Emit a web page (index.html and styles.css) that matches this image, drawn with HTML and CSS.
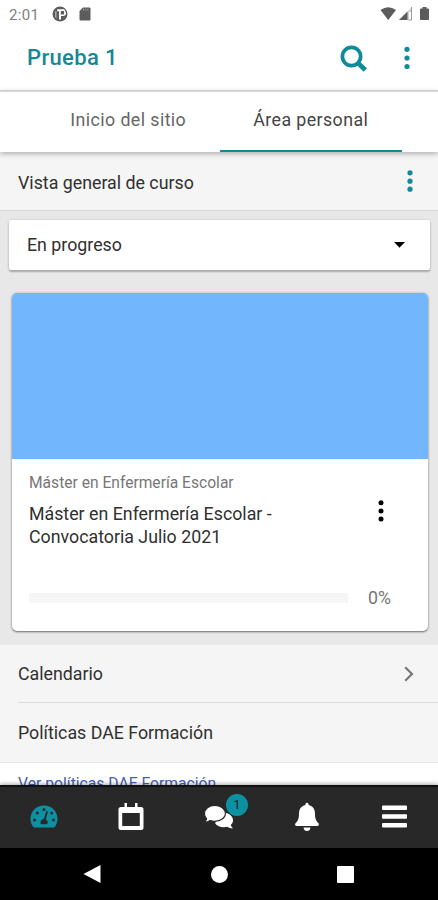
FILE: index.html
```html
<!DOCTYPE html>
<html lang="es">
<head>
<meta charset="utf-8">
<meta name="viewport" content="width=device-width, initial-scale=1">
<title>Prueba 1</title>
<link rel="stylesheet" href="styles.css">
</head>
<body>
<div class="phone">
  <div class="status">
    <span class="clock">2:01</span>
    <svg class="st-app" width="16" height="16" viewBox="0 0 16 16"><circle cx="8" cy="8" r="7.500" fill="#5c5c5c"/><path d="M5.200 3.200H12.200L13.800 6V9L11.500 10H9V13.500H7V5.200H5.200Z" fill="#fff"/><path d="M8.800 5H12V8.500H8.800Z" fill="#5c5c5c"/><path d="M3 5.500V11L4.500 12.500V5Z" fill="#aaa"/></svg>
    <svg class="st-sd" width="12" height="14" viewBox="0 0 12 14"><path d="M4 0.500h6.500a1 1 0 0 1 1 1v11a1 1 0 0 1-1 1h-9a1 1 0 0 1-1-1V4Z" fill="#5c5c5c"/><path d="M4.500 1.500v2.500M6.700 1.500v2.500M8.900 1.500v2.500" stroke="#999" stroke-width=".8"/></svg>
    <svg class="st-right" width="50" height="16" viewBox="0 0 50 16"><path d="M0.500 4Q8 -1.600 16 4L8.200 14Z" fill="#5c5c5c"/><path d="M32 1V14H19Z" fill="#d0d0d0"/><path d="M27.500 5.500V14H19Z" fill="#5c5c5c"/><path d="M29 6h3v8h-3z" fill="#fff"/><path d="M31.500 1v13h-3" stroke="#999" stroke-width="1" fill="none"/><path d="M42.500 1h4v1.500H48a1 1 0 0 1 1 1V13a1 1 0 0 1-1 1h-7a1 1 0 0 1-1-1V3.500a1 1 0 0 1 1-1h1.500Z" fill="#5c5c5c"/></svg>
  </div>
  <header class="bar">
    <h1 class="title">Prueba 1</h1>
    <svg class="search" width="28" height="28" viewBox="0 0 28 28" fill="none" stroke="#0f8a98"><circle cx="11.500" cy="11.500" r="9.100" stroke-width="3.700"/><path d="M18.500 18.500L25.300 25" stroke-width="4.600"/></svg>
    <svg class="dots" width="6" height="24" viewBox="0 0 6 24" fill="#0f8a98"><circle cx="3" cy="3.300" r="2.600"/><circle cx="3" cy="12" r="2.600"/><circle cx="3" cy="20.500" r="2.600"/></svg>
  </header>
  <nav class="tabs">
    <a class="tab">Inicio del sitio</a>
    <a class="tab active">Área personal</a>
  </nav>
  <main class="content">
    <section class="block-head">
      <h2 class="label">Vista general de curso</h2>
      <svg class="dots" width="6" height="24" viewBox="0 0 6 24" fill="#0f8a98"><circle cx="3" cy="3.800" r="2.600"/><circle cx="3" cy="12.200" r="2.600"/><circle cx="3" cy="20.200" r="2.600"/></svg>
    </section>
    <section class="courses">
      <div class="select"><span class="label">En progreso</span><svg width="11" height="6" viewBox="0 0 11 6"><path d="M0 0H11L5.500 5.800Z" fill="#000"/></svg></div>
      <article class="card">
        <div class="cover"></div>
        <div class="card-body">
          <p class="category">Máster en Enfermería Escolar</p>
          <div class="course-row">
            <h3 class="course">Máster en Enfermería Escolar -<br>Convocatoria Julio 2021</h3>
            <svg class="card-dots" width="6" height="24" viewBox="0 0 6 24" fill="#000"><circle cx="3" cy="3.800" r="2.500"/><circle cx="3" cy="12" r="2.500"/><circle cx="3" cy="20" r="2.500"/></svg>
          </div>
          <div class="progress"><div class="track"></div><span class="pct">0%</span></div>
        </div>
      </article>
    </section>
    <section class="list">
      <div class="item lined"><span class="label">Calendario</span><svg width="10" height="16" viewBox="0 0 10 16"><path d="M1.200 1.200L8 8L1.200 14.800" fill="none" stroke="#757575" stroke-width="2.100"/></svg></div>
      <div class="item last"><span class="label">Políticas DAE Formación</span></div>
    </section>
    <section class="policy"><a class="label link">Ver políticas DAE Formación</a></section>
  </main>
  <nav class="bottom">
    <a class="nav-item"><svg width="28" height="23" viewBox="0 0 28 23"><path d="M14 0.500C6.200 0.500 0.500 6.500 0.500 13.800c0 2.800.8 5.400 2.200 7.500q.7 1.200 2 1.200h18.600q1.300 0 2-1.200c1.400-2.100 2.200-4.700 2.200-7.500C27.500 6.500 21.800.5 14 .5Z" fill="#0c91a3"/><g fill="#282828"><circle cx="14" cy="4.600" r="1.500"/><circle cx="7.300" cy="8" r="1.500"/><circle cx="4.500" cy="15" r="1.500"/><circle cx="21.700" cy="8" r="1.500"/><circle cx="23.500" cy="15" r="1.500"/><path d="M16.300 6L18 6.500L15.800 14.500a3.500 3.500 0 0 1 1.300 4.700H10.900a3.500 3.500 0 0 1 3-5.200Z"/></g></svg></a>
    <a class="nav-item"><svg width="26" height="29" viewBox="0 0 26 29"><path d="M6.500 1h2.500v4H17V1h2.500v4H23q2.500 0 2.500 2.500v18Q25.500 28 23 28H3Q.5 28 .5 25.500v-18Q.5 5 3 5h3.500ZM4.200 11v13h17.600V11Z" fill="#fff" fill-rule="evenodd"/></svg></a>
    <a class="nav-item chat"><svg width="30" height="24" viewBox="0 0 30 24"><path d="M20.500 7.500c4.800.8 8.500 4 8.500 7.700 0 1.900-.9 3.600-2.300 4.900.4 1.300 1.300 2.400 2.200 3.400-2.300 0-4.200-.7-5.500-1.700-5.900 1.300-10.700-.7-12.400-3.900Z" fill="#fff"/><path d="M10.800.5C4.900.5.5 4.200.5 8.700c0 1.900.8 3.700 2.200 5.100-.4 1.300-1.300 2.500-2.200 3.400 2.300 0 4.300-.8 5.600-1.700 1.400.5 3 .8 4.700.8 5.900 0 10.600-3.400 10.600-7.700S16.700.5 10.800.5Z" fill="#fff" stroke="#282828" stroke-width="1.100"/></svg><span class="badge">1</span></a>
    <a class="nav-item"><svg width="26" height="30" viewBox="0 0 26 30"><path d="M13 .8c1.100 0 1.600.8 1.600 2.100C18.900 3.800 21 7.300 21 11.500c0 5.300 1.200 7.400 3.300 9.600 1.300 1.400.5 3-1.100 3H2.800c-1.600 0-2.400-1.600-1.100-3C3.800 18.900 5 16.800 5 11.500c0-4.200 2.100-7.700 6.400-8.600C11.400 1.600 11.900.8 13 .8ZM9.600 25.500h6.800a3.400 3.400 0 0 1-6.800 0Z" fill="#fff"/></svg></a>
    <a class="nav-item"><svg width="25" height="23" viewBox="0 0 25 23" fill="#fff"><rect y="0.500" width="25" height="4.600" rx="1"/><rect y="9.200" width="25" height="4.600" rx="1"/><rect y="17.900" width="25" height="4.600" rx="1"/></svg></a>
  </nav>
  <div class="system">
    <svg width="18" height="20" viewBox="0 0 18 20"><path d="M.5 10L17.500 1V19Z" fill="#fff"/></svg>
    <span class="home"></span>
    <span class="recent"></span>
  </div>
</div>
</body>
</html>
```

FILE: styles.css
```css
* { box-sizing: border-box; margin: 0; padding: 0; }
body { font-family: Roboto, "Liberation Sans", sans-serif; background: #fff; color: #222; }
svg { display: block; flex: none; }
.phone { width: 438px; height: 900px; display: flex; flex-direction: column; overflow: hidden; background: #fff; }
.status { height: 28px; flex: none; display: flex; align-items: center; padding: 0 8px 0 9px; }
.clock { width: 43px; font-size: 15px; letter-spacing: .35px; color: #808080; white-space: nowrap; padding-top: 1px; }
.st-sd { margin-left: 11px; }
.st-right { margin-left: auto; }
.bar { height: 62px; flex: none; display: flex; align-items: center; padding: 0 28px 1px 27px; }
.title { flex: 1; font-size: 22px; font-weight: 500; letter-spacing: .35px; color: #178796; line-height: 30px; padding-bottom: 2px; }
.search { margin-right: 36px; }
.bar .dots { margin-bottom: 1px; }
.tabs { position: relative; height: 62px; flex: none; display: flex; padding: 0 36px 0 37px; border-top: 2px solid #d4d4d4; background: #fff; box-shadow: 0 2px 5px rgba(0,0,0,.28); }
.tab { flex: 1; display: flex; align-items: center; justify-content: center; font-size: 17.8px; letter-spacing: .42px; color: #666; border-bottom: 2.5px solid transparent; padding-bottom: 4px; white-space: nowrap; }
.tab.active { color: #444; border-color: #168796; }
.content { height: 633px; flex: none; overflow: hidden; }
.label { font-size: 17.8px; font-weight: 400; line-height: 24px; white-space: nowrap; color: #303030; }
.block-head { height: 59px; display: flex; align-items: center; justify-content: space-between; padding: 3px 25px 0 18px; background: #f5f5f5; border-bottom: 1px solid #d6d6d6; }
.block-head .dots { margin-bottom: 4px; }
.courses { height: 434px; padding: 9px 8px 0 9px; background: #e8e8e8; }
.select { height: 50px; display: flex; align-items: center; justify-content: space-between; padding: 0 25px 0 18px; background: #fff; border-radius: 2px; box-shadow: 0 2px 2px rgba(0,0,0,.25), 0 0 3px rgba(0,0,0,.14); }
.card { height: 338px; margin: 23px 2px 0 3px; overflow: hidden; background: #fff; border-radius: 5px; box-shadow: 0 1px 2px rgba(0,0,0,.5), 0 0 3px rgba(0,0,0,.15); }
.cover { height: 166px; background: #72b6fe; }
.card-body { padding: 14px 37px 0 17px; }
.category { font-size: 15.6px; line-height: 20px; color: #777; white-space: nowrap; }
.course-row { display: flex; justify-content: space-between; padding-right: 7px; margin-top: 10px; }
.course { font-size: 17.8px; font-weight: 400; line-height: 22.5px; color: #303030; white-space: nowrap; }
.card-dots { margin-top: -4px; }
.progress { display: flex; align-items: center; justify-content: space-between; margin-top: 39px; }
.track { width: 319px; height: 10px; background: #f6f6f6; }
.pct { font-size: 17.8px; line-height: 22px; color: #757575; }
.list { background: #f5f5f5; }
.item { height: 58px; margin-left: 18px; padding-right: 24px; display: flex; align-items: center; justify-content: space-between; }
.lined { border-bottom: 1px solid #dcdcdc; }
.last { height: 60px; margin-left: 0; padding-left: 18px; border-bottom: 1px solid #e7e7e7; }
.policy { padding: 9px 18px 0; background: #fff; height: 30px; }
.link { display: block; font-size: 15.7px; color: #465eb0; }
.bottom { position: relative; height: 63px; flex: none; display: flex; background: #282828; border-top: 2px solid #111; box-shadow: 0 -1px 4px rgba(0,0,0,.35); padding-bottom: 2px; }
.nav-item { flex: 1; display: flex; align-items: center; justify-content: center; }
.chat { position: relative; }
.badge { position: absolute; left: 50%; top: 7px; margin-left: 7px; width: 22px; height: 22px; border-radius: 50%; background: #0c91a3; color: #222; font-size: 13px; line-height: 22px; text-align: center; }
.system { height: 52px; flex: none; background: #000; display: flex; align-items: center; justify-content: space-between; padding: 0 84px 0 83px; }
.home { width: 17px; height: 17px; border-radius: 50%; background: #fff; }
.recent { width: 17px; height: 17px; border-radius: 1px; background: #fff; }
```
